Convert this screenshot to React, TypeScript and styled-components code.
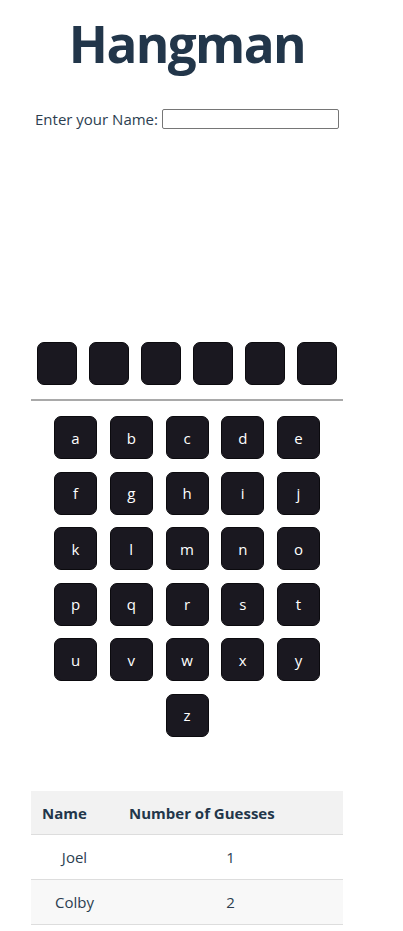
import React from 'react'
import styled, { createGlobalStyle } from 'styled-components'

const GlobalStyle = createGlobalStyle`
  body {
    margin: 0;
    background: #ffffff;
    font-family: "Open Sans", "Noto Sans", sans-serif;
    color: #2c3e50;
  }
`

const Page = styled.div`
  width: 312px;
  margin: 0 0 0 31px;
  display: flex;
  flex-direction: column;
  align-items: center;
`

const Title = styled.h1`
  margin: 13px 0 0 0;
  font-size: 51.2px;
  line-height: 60px;
  font-weight: 700;
  letter-spacing: -1.6px;
  color: #22364a;
`

const NameRow = styled.label`
  margin-top: 35px;
  display: flex;
  align-items: center;
  gap: 4px;
  font-size: 15px;
  line-height: 22px;
  white-space: nowrap;
`

const NameInput = styled.input`
  width: 177px;
  height: 20px;
  flex-shrink: 0;
  box-sizing: border-box;
  border: 1px solid #767676;
  border-radius: 2px;
  padding: 0 3px;
  font-family: inherit;
`

const Gallows = styled.div`
  height: 212px;
  width: 100%;
`

const SlotRow = styled.div`
  display: flex;
  gap: 12px;
`

const Slot = styled.div`
  width: 40px;
  height: 43px;
  box-sizing: border-box;
  border-radius: 7px;
  border: 1px solid #0b0a0e;
  background: #1a1820;
`

const Divider = styled.hr`
  width: 100%;
  margin: 14px 0 15px 0;
  border: none;
  border-top: 2px solid #a9a9a9;
`

const Keyboard = styled.div`
  width: 100%;
  display: flex;
  flex-wrap: wrap;
  justify-content: center;
  gap: 12.6px 12.75px;
`

const Key = styled.button`
  width: 43px;
  height: 43px;
  box-sizing: border-box;
  border-radius: 7px;
  border: 1px solid #0b0a0e;
  background: #1a1820;
  color: #ffffff;
  font-family: inherit;
  font-size: 15px;
  padding: 0;
  cursor: pointer;
`

const Scores = styled.table`
  margin-top: 54px;
  width: 100%;
  border-collapse: collapse;
  font-size: 15px;
`

const HeadCell = styled.th<{ $w?: number }>`
  text-align: left;
  padding: 11px 11px;
  height: 44px;
  box-sizing: border-box;
  background: #f2f2f2;
  border-bottom: 1px solid #dddddd;
  font-weight: 700;
  color: #22364a;
  width: ${p => (p.$w ? `${p.$w}px` : 'auto')};
`

const Row = styled.tr<{ $alt?: boolean }>`
  background: ${p => (p.$alt ? '#f8f8f8' : '#ffffff')};
`

const Cell = styled.td`
  text-align: center;
  height: 45px;
  box-sizing: border-box;
  border-bottom: 1px solid #dddddd;
  padding: 0 11px;
`

const letters = 'abcdefghijklmnopqrstuvwxyz'.split('')

const scores = [
  { name: 'Joel', guesses: 1 },
  { name: 'Colby', guesses: 2 },
]

export default function App() {
  return (
    <>
      <GlobalStyle />
      <Page>
        <Title>Hangman</Title>
        <NameRow>
          Enter your Name:
          <NameInput type="text" />
        </NameRow>
        <Gallows />
        <SlotRow>
          {Array.from({ length: 6 }).map((_, i) => (
            <Slot key={i} />
          ))}
        </SlotRow>
        <Divider />
        <Keyboard>
          {letters.map(l => (
            <Key key={l}>{l}</Key>
          ))}
        </Keyboard>
        <Scores>
          <thead>
            <tr>
              <HeadCell $w={87}>Name</HeadCell>
              <HeadCell>Number of Guesses</HeadCell>
            </tr>
          </thead>
          <tbody>
            {scores.map((s, i) => (
              <Row key={s.name} $alt={i % 2 === 1}>
                <Cell>{s.name}</Cell>
                <Cell>{s.guesses}</Cell>
              </Row>
            ))}
          </tbody>
        </Scores>
      </Page>
    </>
  )
}
